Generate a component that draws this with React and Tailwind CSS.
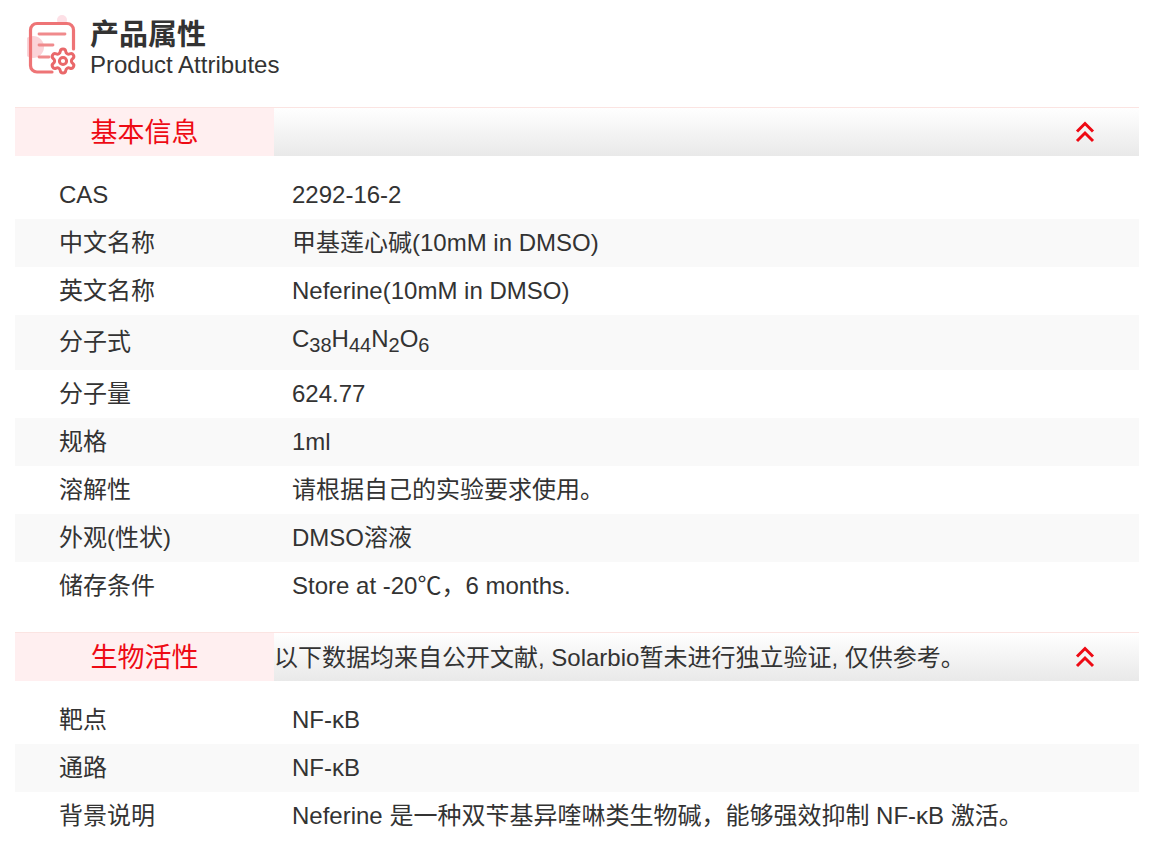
const Sub = ({ children }) => <sub className="text-[20px] leading-none">{children}</sub>;

const basicRows = [
  ["CAS", "2292-16-2"],
  ["中文名称", "甲基莲心碱(10mM in DMSO)"],
  ["英文名称", "Neferine(10mM in DMSO)"],
  [
    "分子式",
    <span className="block pb-[8px]">
      C<Sub>38</Sub>H<Sub>44</Sub>N<Sub>2</Sub>O<Sub>6</Sub>
    </span>,
    true,
  ],
  ["分子量", "624.77"],
  ["规格", "1ml"],
  ["溶解性", "请根据自己的实验要求使用。"],
  ["外观(性状)", "DMSO溶液"],
  ["储存条件", "Store at -20℃，6 months."],
];

const bioRows = [
  ["靶点", "NF-κB"],
  ["通路", "NF-κB"],
  ["背景说明", "Neferine 是一种双苄基异喹啉类生物碱，能够强效抑制 NF-κB 激活。"],
];

const AttrIcon = () => (
  <svg width="52" height="62" viewBox="0 0 52 62" fill="none" className="shrink-0 blur-[0.5px]">
    <circle cx="6" cy="32" r="11" fill="#fbd3d8" />
    <circle cx="35" cy="5" r="5" fill="#fde0e6" />
    <path
      d="M25 57H10a6.500 6.500 0 0 1-6.500-6.500V15a6.500 6.500 0 0 1 6.500-6.500h30a6.500 6.500 0 0 1 6.500 6.500v19"
      stroke="#ee7476"
      strokeWidth="3.200"
      strokeLinecap="round"
    />
    <path d="M12 19h26M12 30h14M12 42h10" stroke="#f08a8c" strokeWidth="2.800" strokeLinecap="round" />
    <g transform="translate(21.600 31.600) scale(1.2)" stroke="#e9686a" strokeWidth="2.500" strokeLinejoin="round">
      <path d="M9.671 4.136a2.34 2.34 0 0 1 4.659 0 2.34 2.34 0 0 0 3.319 1.915 2.34 2.34 0 0 1 2.33 4.033 2.34 2.34 0 0 0 0 3.831 2.34 2.34 0 0 1-2.33 4.033 2.34 2.34 0 0 0-3.319 1.915 2.34 2.34 0 0 1-4.659 0 2.34 2.34 0 0 0-3.32-1.915 2.34 2.34 0 0 1-2.33-4.033 2.34 2.34 0 0 0 0-3.831A2.34 2.34 0 0 1 6.35 6.051a2.34 2.34 0 0 0 3.32-1.915" />
      <circle cx="12" cy="12" r="3" />
    </g>
  </svg>
);

const ChevronsUp = () => (
  <svg width="20" height="22" viewBox="0 0 20 22" fill="none" className="shrink-0">
    <path d="M2 10.500 10 2.500l8 8M2 20l8-8 8 8" stroke="#ee0a14" strokeWidth="3" />
  </svg>
);

const SectionHeader = ({ title, note }) => (
  <div className="flex h-[49px] border-t border-[#fbe4e2] bg-gradient-to-b from-white to-[#e9e9e9]">
    <div className="w-[259px] shrink-0 bg-[#ffeff0] text-center text-[27px] leading-[50px] text-[#ee0a14]">
      {title}
    </div>
    <div className="flex-1 text-[24px] leading-[50px] text-[#333]">{note}</div>
    <div className="flex w-[64px] shrink-0 items-center justify-start">
      <ChevronsUp />
    </div>
  </div>
);

const AttrRow = ({ label, value, tall, striped }) => (
  <div className={`flex items-center text-[24px] text-[#333] ${tall ? "h-[55px]" : "h-[48px]"} ${striped ? "bg-[#f9f9f9]" : ""}`}>
    <div className={`w-[277px] shrink-0 pl-[44px] ${tall ? "pb-[2px]" : ""}`}>{label}</div>
    <div className="flex-1">{value}</div>
  </div>
);

export default function App() {
  return (
    <div className="min-h-[864px] overflow-hidden bg-white pl-[15px] pr-[13px] pt-[15px] font-['Liberation_Sans','Noto_Sans_CJK_SC',sans-serif]">
      <div className="flex h-[92px] items-start pl-[12px]">
        <AttrIcon />
        <div className="ml-[11px] mt-[1px] text-[#333]">
          <div className="text-[29px] font-bold leading-[38px]">产品属性</div>
          <div className="text-[24px] leading-[22px]">Product Attributes</div>
        </div>
      </div>

      <SectionHeader title="基本信息" />
      <div className="pb-[22px] pt-[15px]">
        {basicRows.map(([label, value, tall], i) => (
          <AttrRow key={label} label={label} value={value} tall={tall} striped={i % 2 === 1} />
        ))}
      </div>

      <SectionHeader title="生物活性" note="以下数据均来自公开文献, Solarbio暂未进行独立验证, 仅供参考。" />
      <div className="pt-[15px]">
        {bioRows.map(([label, value], i) => (
          <AttrRow key={label} label={label} value={value} striped={i % 2 === 1} />
        ))}
      </div>
    </div>
  );
}
